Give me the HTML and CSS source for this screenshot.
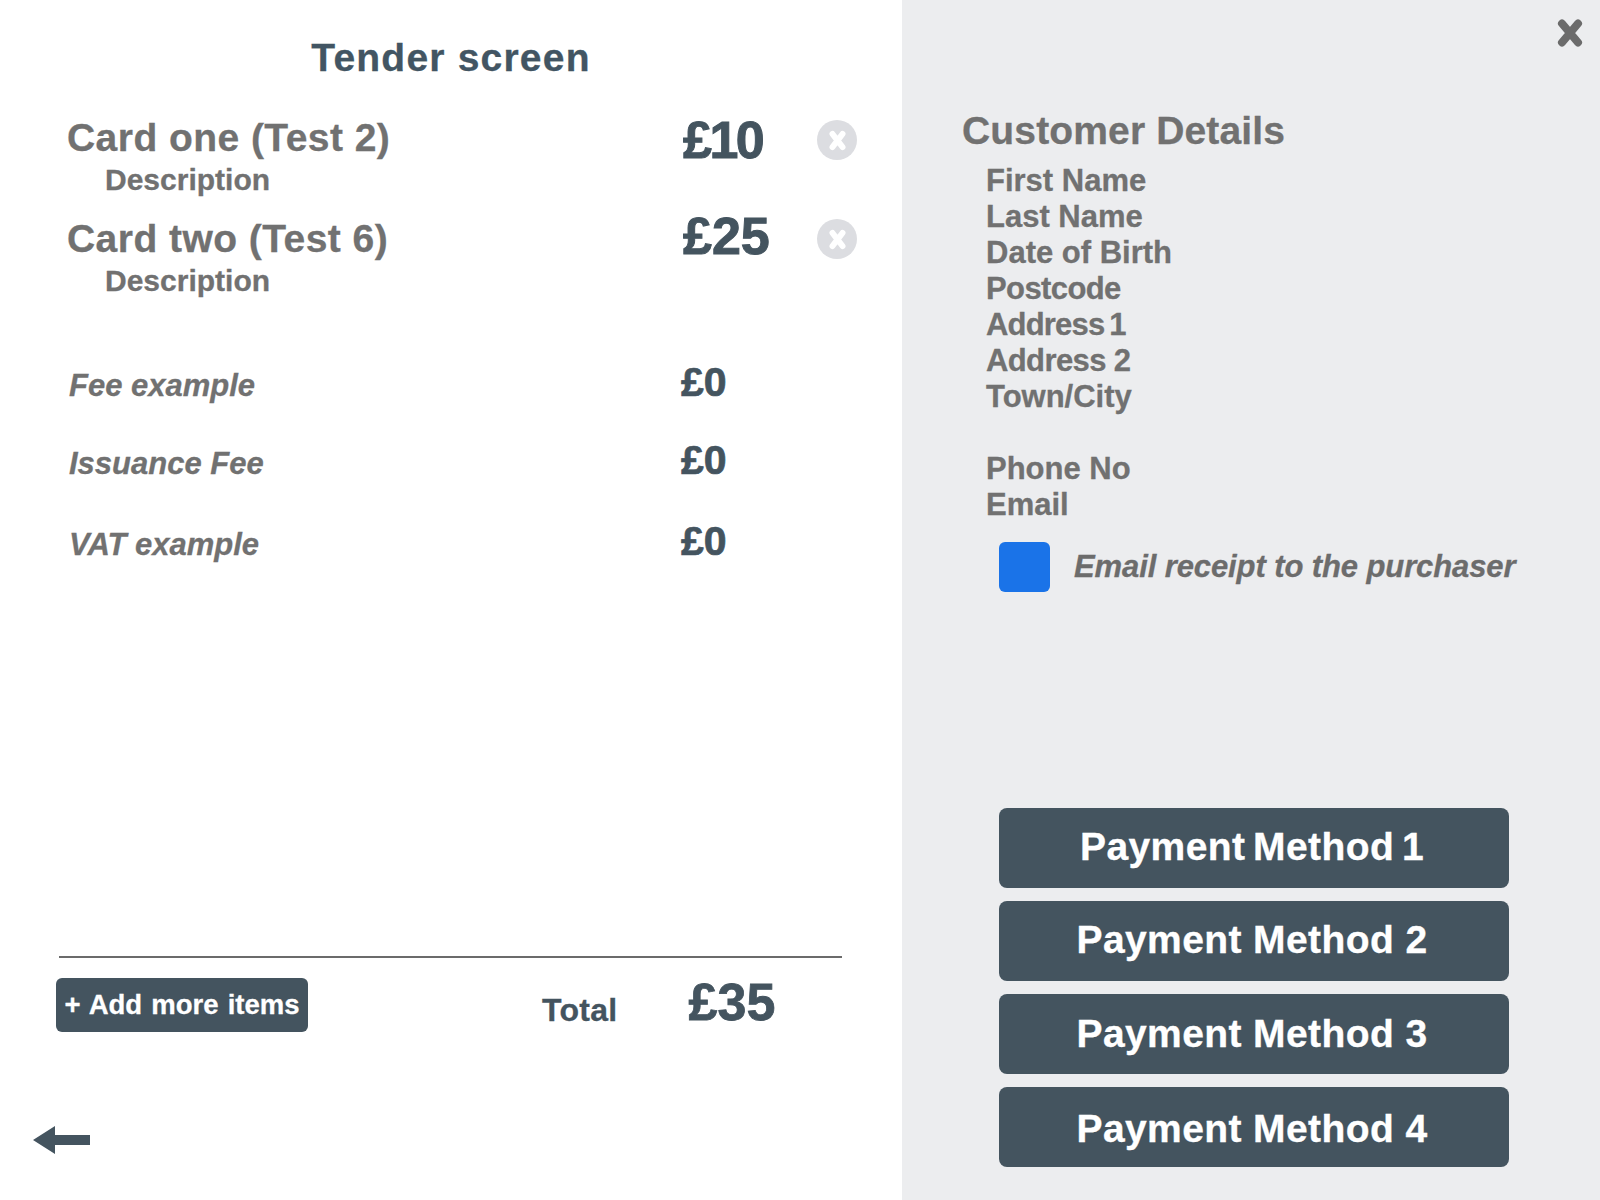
FILE: index.html
```html
<!DOCTYPE html>
<html lang="en">
<head>
<meta charset="utf-8">
<title>Tender screen</title>
<link rel="stylesheet" href="styles.css">
</head>
<body>
<div class="app">
  <main class="left">
    <h1 class="title">Tender screen</h1>
    <div class="item">
      <div class="item-text"><div class="item-name">Card one (Test 2)</div><div class="item-desc">Description</div></div>
      <div class="price price-ten">£10</div>
      <svg class="remove" width="40" height="40" viewBox="0 0 40 40"><circle cx="20" cy="20" r="20" fill="#dcdde1"/><path d="M15.5 14 25.5 27M25.5 14 15.5 27" stroke="#fff" stroke-width="6" stroke-linecap="round" fill="none"/></svg>
    </div>
    <div class="item item-second">
      <div class="item-text"><div class="item-name">Card two (Test 6)</div><div class="item-desc">Description</div></div>
      <div class="price">£25</div>
      <svg class="remove" width="40" height="40" viewBox="0 0 40 40"><circle cx="20" cy="20" r="20" fill="#dcdde1"/><path d="M15.5 14 25.5 27M25.5 14 15.5 27" stroke="#fff" stroke-width="6" stroke-linecap="round" fill="none"/></svg>
    </div>
    <div class="fees">
      <div class="fee"><span class="fee-name">Fee example</span><span class="fee-value">£0</span></div>
      <div class="fee"><span class="fee-name">Issuance Fee</span><span class="fee-value">£0</span></div>
      <div class="fee"><span class="fee-name">VAT example</span><span class="fee-value">£0</span></div>
    </div>
    <div class="foot">
      <button class="add">+ Add more items</button>
      <span class="total-label">Total</span>
      <span class="total">£35</span>
    </div>
    <svg class="back" width="57" height="28" viewBox="0 0 57 28"><path d="M0 14 22 0V9H57V19H22V28Z" fill="#44545f"/></svg>
  </main>
  <aside class="right">
    <div class="close-row">
      <svg width="26" height="28" viewBox="0 0 26 28"><path d="M5 4.5 21 23.5M21 4.5 5 23.5" stroke="#6b6b6b" stroke-width="8" stroke-linecap="round" fill="none"/></svg>
    </div>
    <h2 class="cust-title">Customer Details</h2>
    <div class="fields">
      <div>First Name</div><div>Last Name</div><div>Date of Birth</div><div class="condensed">Postcode</div><div class="condensed word-tight">Address 1</div><div class="condensed">Address 2</div><div>Town/City</div>
      <div class="field-gap">Phone No</div><div>Email</div>
    </div>
    <div class="receipt"><span class="check"></span><span class="receipt-label">Email receipt to the purchaser</span></div>
    <div class="methods">
      <button class="method method-one">Payment Method 1</button>
      <button class="method">Payment Method 2</button>
      <button class="method">Payment Method 3</button>
      <button class="method">Payment Method 4</button>
    </div>
  </aside>
</div>
</body>
</html>
```
FILE: styles.css
```css
* { box-sizing: border-box; }
html, body { margin: 0; height: 1200px; background: #fff; }
body { font-family: "Liberation Sans", Arial, sans-serif; font-weight: 700; overflow: hidden; -webkit-text-stroke: .3px; }
button { font-family: inherit; font-weight: 700; border: 0; cursor: pointer; }
.app { display: flex; height: 1200px; }
.left { width: 902px; display: flex; flex-direction: column; padding: 0 60px 46px 56px; }
.right { flex: 1; background: #ecedef; display: flex; flex-direction: column; padding: 19px 17px 33px 59px; }
.title { margin: 36px 0 0; height: 44px; line-height: 44px; text-align: center; font-size: 39px; letter-spacing: 1.2px; color: #425563; width: 790px; }
.item { display: grid; grid-template-columns: 616px 134px 40px; align-items: start; padding-left: 11px; margin-top: 34px; }
.item-second { margin-top: 18px; }
.item-name { font-size: 39px; line-height: 48px; color: #717171; letter-spacing: .45px; }
.item-desc { font-size: 30px; line-height: 34px; color: #717171; padding-left: 38px; margin-top: 1px; }
.price { font-size: 52px; line-height: 52px; color: #44545f; -webkit-text-stroke: 1px #44545f; }
.price-ten { letter-spacing: -2.5px; }
.item-second .price { margin-top: -5px; }
.remove { display: block; margin-top: 6px; }
.item-second .remove { margin-top: 4px; }
.fees { margin-top: 61px; padding-left: 13px; display: flex; flex-direction: column; }
.fee { display: grid; grid-template-columns: 612px auto; align-items: center; height: 40px; margin-bottom: 38px; }
.fee:nth-child(2) { margin-bottom: 41px; }
.fee-name { font-style: italic; font-size: 31px; color: #717171; padding-top: 7px; }
.fee-value { font-size: 41px; color: #44545f; -webkit-text-stroke: .7px #44545f; }
.foot { margin-top: auto; border-top: 2px solid #6b6b6b; margin-left: 3px; display: flex; align-items: flex-start; padding-top: 20px; }
.add { margin-left: -3px; width: 252px; height: 54px; background: #44545f; color: #fff; border-radius: 6px; font-size: 27.5px; word-spacing: 1.5px; padding: 0; }
.total-label { margin-left: 234px; margin-top: 14px; font-size: 32px; letter-spacing: .3px; color: #44545f; }
.total { margin-left: 71px; margin-top: -1px; font-size: 52px; line-height: 50px; color: #44545f; -webkit-text-stroke: .8px #44545f; }
.back { margin: 94px 0 0 -23px; display: block; flex: none; }
.close-row { display: flex; justify-content: flex-end; height: 28px; }
.cust-title { margin: 66px 0 0 1px; font-size: 39px; line-height: 36px; color: #717171; letter-spacing: .15px; }
.fields { margin: 13.5px 0 0 25px; color: #717171; font-size: 31px; line-height: 36px; }
.fields > div { height: 36px; }
.condensed { letter-spacing: -.6px; }
.word-tight { word-spacing: -3px; letter-spacing: -.8px; }
.field-gap { margin-top: 36px; }
.receipt { display: flex; align-items: center; margin: 19.5px 0 0 38px; }
.check { width: 51px; height: 50px; border-radius: 6px; background: #1a73e8; }
.receipt-label { margin-left: 24px; font-style: italic; font-size: 31px; letter-spacing: -.1px; color: #6c6c6c; }
.methods { margin-top: auto; margin-left: 38px; width: 510px; display: flex; flex-direction: column; gap: 13px; }
.method { height: 80px; background: #44545f; color: #fff; border-radius: 8px; font-size: 39px; letter-spacing: .4px; padding: 0 4px 2px 0; }
.method-one { word-spacing: -3.5px; }
.method:nth-child(3) { padding-bottom: 0; }
.method:nth-child(4) { padding-bottom: 0; padding-top: 3px; }
```
